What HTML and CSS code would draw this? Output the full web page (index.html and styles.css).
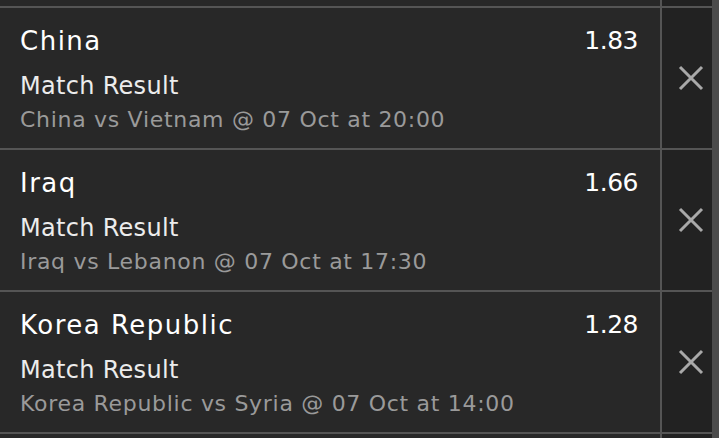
FILE: index.html
```html
<!DOCTYPE html>
<html lang="en">
<head>
  <meta charset="UTF-8">
  <title>Bet Slip</title>
  <link rel="stylesheet" href="styles.css">
</head>
<body>

<div class="slip">
  <div class="bets">
    <div class="bet bet-stub">
      <div class="bet-info"></div>
      <div class="bet-remove"></div>
    </div>

    <div class="bet">
      <div class="bet-info">
        <div class="bet-top">
          <span class="bet-team">China</span>
          <span class="bet-odds">1.83</span>
        </div>
        <div class="bet-market">Match Result</div>
        <div class="bet-event">China vs Vietnam @ 07 Oct at 20:00</div>
      </div>
      <button class="bet-remove" aria-label="Remove">
        <svg width="26" height="26" viewBox="0 0 26 26"><path d="M2 2L24 24M24 2L2 24"/></svg>
      </button>
    </div>

    <div class="bet">
      <div class="bet-info">
        <div class="bet-top">
          <span class="bet-team">Iraq</span>
          <span class="bet-odds">1.66</span>
        </div>
        <div class="bet-market">Match Result</div>
        <div class="bet-event">Iraq vs Lebanon @ 07 Oct at 17:30</div>
      </div>
      <button class="bet-remove" aria-label="Remove">
        <svg width="26" height="26" viewBox="0 0 26 26"><path d="M2 2L24 24M24 2L2 24"/></svg>
      </button>
    </div>

    <div class="bet">
      <div class="bet-info">
        <div class="bet-top">
          <span class="bet-team">Korea Republic</span>
          <span class="bet-odds">1.28</span>
        </div>
        <div class="bet-market">Match Result</div>
        <div class="bet-event">Korea Republic vs Syria @ 07 Oct at 14:00</div>
      </div>
      <button class="bet-remove" aria-label="Remove">
        <svg width="26" height="26" viewBox="0 0 26 26"><path d="M2 2L24 24M24 2L2 24"/></svg>
      </button>
    </div>

    <div class="bet bet-stub">
      <div class="bet-info"></div>
      <div class="bet-remove"></div>
    </div>
  </div>
  <div class="scroll-strip"></div>
</div>

</body>
</html>
```

FILE: styles.css
```css
:root {
  --row-bg: #282828;
  --col-bg: #222222;
  --line: #555555;
}
* { margin: 0; padding: 0; box-sizing: border-box; }
body {
  font-family: 'DejaVu Sans', sans-serif;
  background: var(--row-bg);
  height: 438px;
  overflow: hidden;
}
.slip {
  display: flex;
  height: 100%;
}
.bets {
  flex: 1;
  display: flex;
  flex-direction: column;
}
.bet {
  display: grid;
  grid-template-columns: 1fr 52px;
  height: 142px;
  border-top: 2px solid var(--line);
}
.bet-stub { height: 6px; border-top: none; }
.bet-stub:last-child { height: 6px; border-top: 2px solid var(--line); }
.bet-info {
  padding: 16px 22px 0 20px;
}
.bet-top {
  display: flex;
  justify-content: space-between;
  font-size: 26px;
  line-height: 34px;
  color: #ffffff;
}
.bet-team { letter-spacing: 1.5px; }
.bet-odds { font-size: 25px; letter-spacing: -0.5px; }
.bet-market {
  margin-top: 12px;
  font-size: 24px;
  line-height: 32px;
  letter-spacing: 0.3px;
  color: #ececec;
}
.bet-event {
  margin-top: 3px;
  font-size: 22px;
  line-height: 30px;
  letter-spacing: 0.7px;
  color: #9a9a9a;
}
.bet-remove {
  display: flex;
  align-items: center;
  justify-content: center;
  padding-left: 7px;
  background: var(--col-bg);
  border: none;
  border-left: 2px solid var(--line);
  cursor: pointer;
}
.bet-remove svg path {
  stroke: #a9a9a9;
  stroke-width: 3;
  fill: none;
}
.scroll-strip {
  width: 7px;
  background: #4b4b4b;
}
```
